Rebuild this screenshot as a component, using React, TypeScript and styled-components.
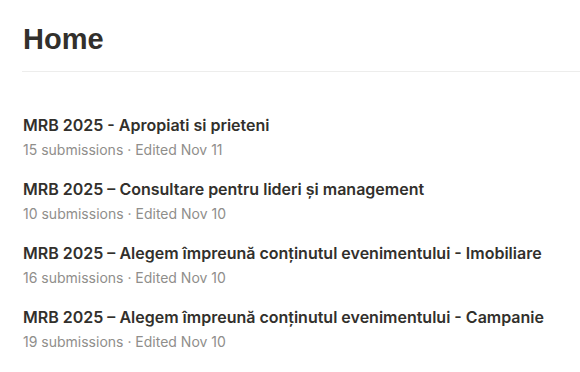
import React from "react";
import styled, { createGlobalStyle } from "styled-components";

const Global = createGlobalStyle`
  html, body { margin: 0; padding: 0; background: #ffffff; }
  body { font-family: Inter, "Noto Sans", sans-serif; color: #37352f; }
`;

const Page = styled.div`
  padding: 22px 0 0 22px;
`;

const Title = styled.h1`
  margin: 0;
  padding-left: 1px;
  font-family: "Liberation Sans", Arial, sans-serif;
  font-weight: 700;
  font-size: 29px;
  line-height: 34px;
  color: #32302c;
`;

const Divider = styled.hr`
  margin: 15px 0 0 0;
  border: 0;
  border-top: 1px solid #ededec;
`;

const List = styled.ul`
  list-style: none;
  margin: 0;
  padding: 43px 0 0 1px;
  display: flex;
  flex-direction: column;
  gap: 19px;
`;

const Item = styled.li`
  display: flex;
  flex-direction: column;
  gap: 5px;
`;

const ItemTitle = styled.div`
  font-size: 16px;
  font-weight: 600;
  line-height: 20px;
  color: #32302c;
`;

const Meta = styled.div`
  font-size: 14px;
  line-height: 20px;
  color: #8f8e8b;
`;

const items = [
  { title: "MRB 2025 - Apropiati si prieteni", count: 15, date: "Nov 11" },
  { title: "MRB 2025 – Consultare pentru lideri și management", count: 10, date: "Nov 10" },
  { title: "MRB 2025 – Alegem împreună conținutul evenimentului - Imobiliare", count: 16, date: "Nov 10" },
  { title: "MRB 2025 – Alegem împreună conținutul evenimentului - Campanie", count: 19, date: "Nov 10" },
];

export default function App() {
  return (
    <>
      <Global />
      <Page>
        <Title>Home</Title>
        <Divider />
        <List>
          {items.map((it) => (
            <Item key={it.title}>
              <ItemTitle>{it.title}</ItemTitle>
              <Meta>
                {it.count} submissions · Edited {it.date}
              </Meta>
            </Item>
          ))}
        </List>
      </Page>
    </>
  );
}
